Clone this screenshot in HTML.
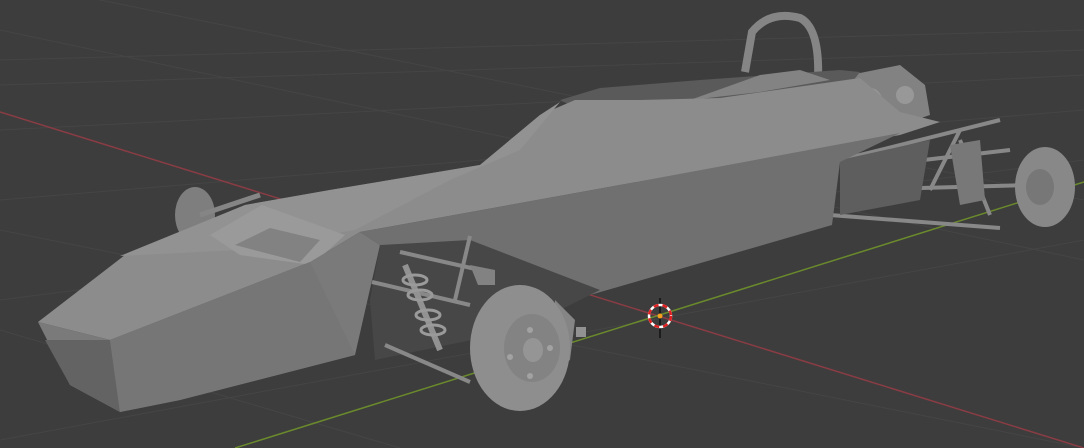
<!DOCTYPE html>
<html><head><meta charset="utf-8"><style>
html,body{margin:0;padding:0;background:#3d3d3d;width:1084px;height:448px;overflow:hidden}
svg{display:block}
</style></head><body>
<svg width="1084" height="448" viewBox="0 0 1084 448" xmlns="http://www.w3.org/2000/svg">
<rect width="1084" height="448" fill="#3d3d3d"/>
<g stroke="#454545" stroke-width="1" fill="none">
<line x1="0" y1="60" x2="1084" y2="30"/>
<line x1="0" y1="85" x2="1084" y2="50"/>
<line x1="0" y1="130" x2="1084" y2="75"/>
<line x1="0" y1="200" x2="1084" y2="110"/>
<line x1="0" y1="300" x2="1084" y2="160"/>
<line x1="0" y1="440" x2="1084" y2="240"/>
<line x1="0" y1="30" x2="1084" y2="260"/>
<line x1="100" y1="0" x2="1084" y2="200"/>
<line x1="0" y1="230" x2="1084" y2="448"/>
<line x1="0" y1="330" x2="400" y2="448"/>
</g>
<line x1="0" y1="112" x2="1084" y2="448" stroke="#8a3c44" stroke-width="1.5"/>
<line x1="235" y1="448" x2="1084" y2="182" stroke="#6a8a2c" stroke-width="1.5"/>
<ellipse cx="195" cy="215" rx="20" ry="28" fill="#7e7e7e"/>
<line x1="200" y1="215" x2="260" y2="195" stroke="#858585" stroke-width="5"/>
<path d="M745 72 L752 32 Q770 10 800 18 Q820 28 818 80" stroke="#858585" stroke-width="8" fill="none"/>
<g stroke="#888" stroke-width="4" fill="none">
<line x1="840" y1="160" x2="1000" y2="120"/>
<line x1="850" y1="190" x2="1030" y2="185"/>
<line x1="830" y1="215" x2="1000" y2="228"/>
<line x1="880" y1="165" x2="1010" y2="150"/>
<line x1="930" y1="190" x2="960" y2="130"/>
<line x1="960" y1="140" x2="990" y2="215"/>
</g>
<path d="M950 145 L980 140 L985 200 L960 205 Z" fill="#787878"/>
<ellipse cx="1045" cy="187" rx="30" ry="40" fill="#888"/>
<ellipse cx="1040" cy="187" rx="14" ry="18" fill="#777"/>
<path d="M850 75 L900 65 L925 85 L930 115 L900 125 L855 115 Z" fill="#828282"/>
<circle cx="870" cy="100" r="12" fill="#959595"/>
<circle cx="905" cy="95" r="9" fill="#989898"/>
<path d="M840 160 L930 140 L920 200 L840 215 Z" fill="#5e5e5e"/>
<path d="M560 100 L600 88 L700 80 L840 70 L860 72 L850 85 L700 100 L580 110 Z" fill="#5a5a5a"/>
<path d="M690 100 L760 75 L800 70 L830 80 L760 92 Z" fill="#838383"/>
<path d="M38 322 L125 255 L245 205 L330 190 L480 165 L540 115 L575 100 L640 100 L720 98 L860 78 L900 112 L940 122 L900 135 L620 185 L360 232 L310 262 L110 340 Z" fill="#8c8c8c"/>
<path d="M120 256 L245 205 L330 190 L480 165 L540 115 L560 102 L520 150 L450 180 L355 230 L240 250 Z" fill="#929292"/>
<path d="M210 235 L262 205 L345 235 L312 265 L240 255 Z" fill="#9a9a9a"/>
<path d="M235 245 L270 228 L320 240 L300 262 Z" fill="#828282"/>
<path d="M360 232 L620 185 L900 133 L840 162 L832 225 L590 295 L380 245 Z" fill="#707070"/>
<path d="M38 322 L110 340 L310 262 L360 232 L380 245 L355 355 L180 400 L120 412 L70 385 Z" fill="#7a7a7a"/>
<path d="M45 340 L110 340 L120 412 L70 385 Z" fill="#636363"/>
<path d="M110 340 L310 262 L355 355 L180 400 L120 412 Z" fill="#767676"/>
<path d="M380 245 L470 240 L600 290 L520 330 L375 360 L370 300 Z" fill="#474747"/>
<g stroke="#888" stroke-width="4" fill="none">
<line x1="400" y1="252" x2="480" y2="270"/>
<line x1="372" y1="282" x2="470" y2="305"/>
<line x1="385" y1="345" x2="470" y2="382"/>
<line x1="470" y1="236" x2="455" y2="300"/>
</g>
<path d="M405 265 L440 350" stroke="#929292" stroke-width="6" fill="none"/>
<g stroke="#9a9a9a" stroke-width="3" fill="none">
<ellipse cx="415" cy="280" rx="12" ry="5"/><ellipse cx="420" cy="295" rx="12" ry="5"/>
<ellipse cx="428" cy="315" rx="12" ry="5"/><ellipse cx="433" cy="330" rx="12" ry="5"/>
</g>
<path d="M470 265 L495 270 L495 285 L478 285 Z" fill="#828282"/>
<path d="M555 300 L575 320 L570 360 L555 370 Z" fill="#858585"/>
<ellipse cx="520" cy="348" rx="50" ry="63" fill="#8e8e8e"/>
<ellipse cx="532" cy="348" rx="28" ry="34" fill="#838383"/>
<ellipse cx="533" cy="350" rx="10" ry="12" fill="#959595"/>
<circle cx="530" cy="330" r="3" fill="#a2a2a2"/><circle cx="550" cy="348" r="3" fill="#a2a2a2"/>
<circle cx="510" cy="357" r="3" fill="#a2a2a2"/><circle cx="530" cy="376" r="3" fill="#a2a2a2"/>
<rect x="576" y="327" width="10" height="10" fill="#929292"/>
<line x1="660" y1="298" x2="660" y2="338" stroke="#111" stroke-width="1.5"/>
<circle cx="660" cy="316" r="11" fill="none" stroke="#fff" stroke-width="2.5"/>
<circle cx="660" cy="316" r="11" fill="none" stroke="#e02020" stroke-width="2.5" stroke-dasharray="5 4"/>
<circle cx="660" cy="316" r="2.5" fill="#f5a020"/>
</svg>
</body></html>
